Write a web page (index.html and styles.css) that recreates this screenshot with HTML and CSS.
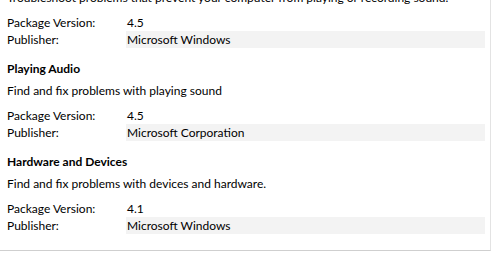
FILE: index.html
```html
<!DOCTYPE html>
<html lang="en">
<head>
  <meta charset="UTF-8">
  <title>Troubleshooters</title>
  <link rel="stylesheet" href="styles.css">
</head>
<body>
  <div class="panel">
    <div class="list">
      <div class="item first">
        <div class="desc">Troubleshoot problems that prevent your computer from playing or recording sound.</div>
        <div class="props">
          <div class="label">Package Version:</div>
          <div class="value">4.5</div>
          <div class="label">Publisher:</div>
          <div class="value shaded">Microsoft Windows</div>
        </div>
      </div>

      <div class="item">
        <div class="title">Playing Audio</div>
        <div class="desc">Find and fix problems with playing sound</div>
        <div class="props">
          <div class="label">Package Version:</div>
          <div class="value">4.5</div>
          <div class="label">Publisher:</div>
          <div class="value shaded">Microsoft Corporation</div>
        </div>
      </div>

      <div class="item">
        <div class="title">Hardware and Devices</div>
        <div class="desc">Find and fix problems with devices and hardware.</div>
        <div class="props">
          <div class="label">Package Version:</div>
          <div class="value">4.1</div>
          <div class="label">Publisher:</div>
          <div class="value shaded">Microsoft Windows</div>
        </div>
      </div>
    </div>
  </div>
</body>
</html>
```

FILE: styles.css
```css
body {
  margin: 0;
  background-color: white;
  font-family: Lato, "Noto Sans", sans-serif;
  font-size: 12px;
  color: #000;
}

.panel {
  width: 491px;
  height: 251px;
  border-right: 1px solid #e3e3e3;
  border-bottom: 1px solid #cfcfcf;
  overflow: hidden;
  box-sizing: border-box;
}

.list {
  padding: 0 5px 0 7px;
}

.item {
  margin-bottom: 12px;
}

.item.first {
  margin-top: -11px;
}

.title {
  font-weight: bold;
  line-height: 17px;
}

.desc {
  line-height: 17px;
  margin-top: 5px;
  white-space: nowrap;
}

.item.first .desc {
  margin-top: 0;
}

.props {
  display: grid;
  grid-template-columns: 119px 1fr;
  margin-top: 8px;
  line-height: 17px;
}

.value {
  padding-left: 1px;
}

.shaded {
  background-color: #f3f3f3;
}
```
